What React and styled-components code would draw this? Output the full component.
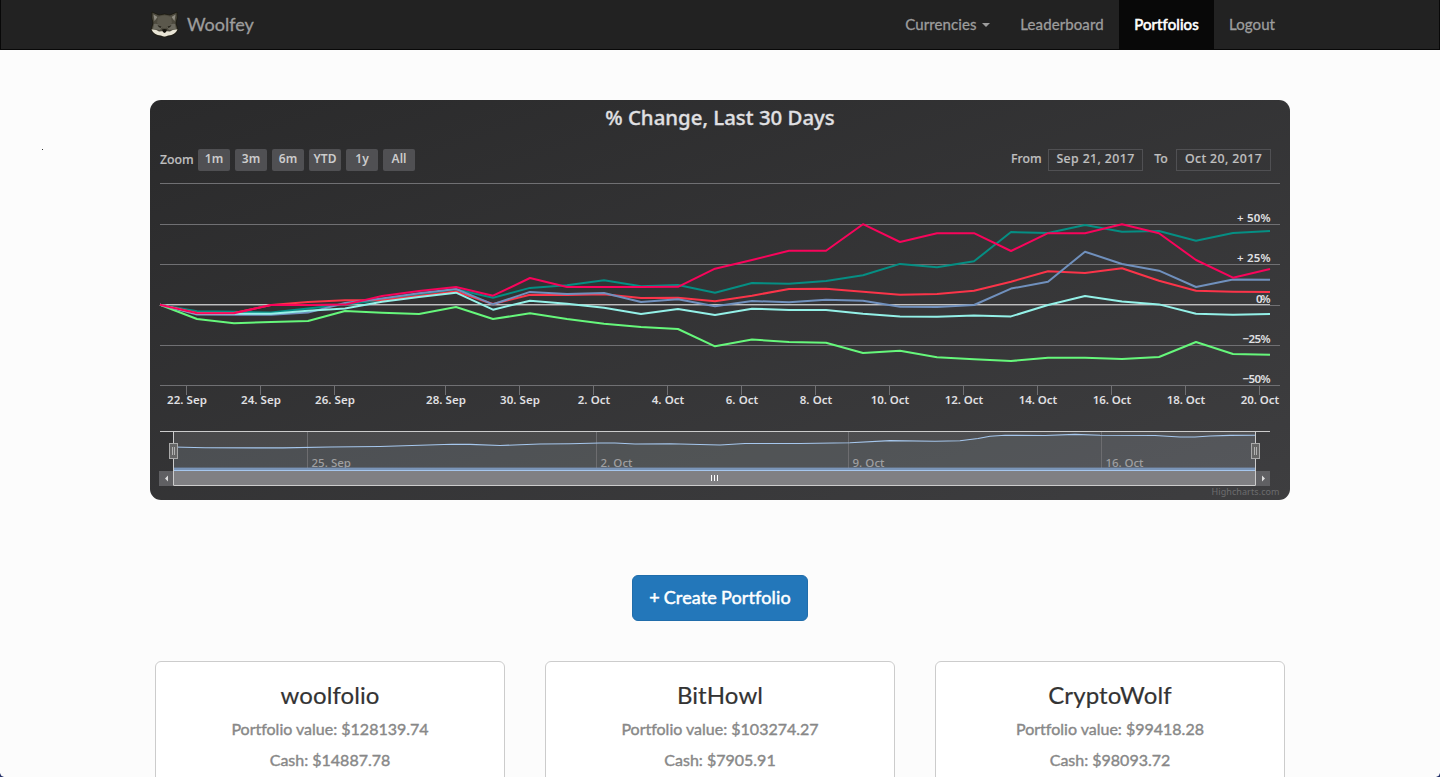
import React from "react";
import styled, { createGlobalStyle } from "styled-components";

const GlobalStyle = createGlobalStyle`
  * { box-sizing: border-box; }
  html, body { margin: 0; height: 100%; overflow: hidden; background: #fcfcfc; }
  body { font-family: Lato, sans-serif; color: #333; }
`;

const CHART_FONT = `"Noto Sans", "Open Sans", sans-serif`;

const Page = styled.div`
  position: relative;
  height: 777px;
  overflow: hidden;
`;

const Navbar = styled.nav`
  height: 50px;
  background: #222;
  border-bottom: 1px solid #080808;
  border-left: 1px solid #080808;
  border-right: 1px solid #080808;
`;

const Container = styled.div`
  width: 1140px;
  margin: 0 auto;
`;

const NavInner = styled(Container)`
  display: flex;
  justify-content: space-between;
  height: 49px;
`;

const Brand = styled.a`
  display: flex;
  align-items: center;
  gap: 8px;
  font-size: 18px;
  line-height: 20px;
  color: #9d9d9d;
  -webkit-text-stroke: 0.3px currentColor;
`;

const BrandName = styled.span`
  padding-bottom: 2px;
`;

const NavList = styled.div`
  display: flex;
`;

const NavLink = styled.a`
  display: flex;
  align-items: center;
  justify-content: center;
  width: ${(p) => p.$width}px;
  padding-bottom: 2px;
  font-size: 15px;
  letter-spacing: 0.1px;
  font-variant-ligatures: none;
  color: ${(p) => (p.$active ? "#fff" : "#9d9d9d")};
  background: ${(p) => (p.$active ? "#080808" : "transparent")};
  -webkit-text-stroke: ${(p) => (p.$active ? 0.6 : 0.3)}px currentColor;
`;

const Caret = styled.span`
  margin: 3px 0 0 5px;
  border-top: 4px solid currentColor;
  border-left: 4px solid transparent;
  border-right: 4px solid transparent;
`;

const ChartPanel = styled.section`
  height: 400px;
  margin-top: 50px;
  border-radius: 11px;
  overflow: hidden;
  background: linear-gradient(to bottom right, #2a2a2b 0%, #3e3e40 100%);
  font-family: ${CHART_FONT};
`;

const ChartTitle = styled.h2`
  margin: 0;
  height: 49px;
  padding-top: 3px;
  line-height: 28px;
  font-size: 20.4px;
  font-weight: 500;
  text-align: center;
  color: #e0e0e3;
  -webkit-text-stroke: 0.3px currentColor;
`;

const RangeBar = styled.div`
  display: flex;
  justify-content: space-between;
  height: 31px;
  padding: 0 19px 0 10px;
  font-size: 12.3px;
  font-weight: 500;
  line-height: 19px;
  color: #c0c0c0;
  -webkit-text-stroke: 0.15px currentColor;
`;

const RangeGroup = styled.div`
  display: flex;
  gap: ${(p) => p.$gap}px;
`;

const RangeLabel = styled.span`
  width: ${(p) => p.$width}px;
  padding-top: ${(p) => p.$drop || 0}px;
  white-space: nowrap;
`;

const RangeButton = styled.button`
  width: 32px;
  height: 22px;
  padding: 0 0 3px;
  border: 0;
  border-radius: 2px;
  background: #505053;
  color: #ccc;
  font: 600 12px/19px ${CHART_FONT};
  -webkit-text-stroke: 0;
`;

const DateBox = styled.span`
  width: 95px;
  height: 22px;
  border: 1px solid #505053;
  line-height: 18px;
  letter-spacing: 0.4px;
  text-align: center;
  white-space: nowrap;
`;

const Plot = styled.svg`
  display: block;
`;

const Actions = styled.div`
  display: flex;
  justify-content: center;
  margin: 75px 0 40px;
`;

const CreateButton = styled.button`
  width: 176px;
  height: 46px;
  padding: 0 0 2px;
  border: 1px solid #206dab;
  border-radius: 6px;
  background: #2377ba;
  color: #fff;
  font: 18px/24px Lato, sans-serif;
  letter-spacing: 0.15px;
  word-spacing: -0.8px;
  font-variant-ligatures: none;
  -webkit-text-stroke: 0.5px currentColor;
`;

const CardRow = styled.div`
  display: grid;
  grid-template-columns: repeat(3, 350px);
  justify-content: center;
  gap: 40px;
`;

const Card = styled.article`
  height: 240px;
  padding-top: 18px;
  border: 1px solid #ccc;
  border-radius: 6px;
  background: #fff;
  text-align: center;
`;

const CardTitle = styled.h3`
  margin: 0 0 3px;
  font-size: 24px;
  font-weight: 400;
  line-height: 30px;
  letter-spacing: 0.1px;
  -webkit-text-stroke: 0.2px currentColor;
`;

const CardLine = styled.p`
  margin: 0;
  font-size: 16px;
  line-height: 31px;
  font-variant-ligatures: none;
  color: #888;
  -webkit-text-stroke: 0.4px currentColor;
`;

const Speck = styled.span`
  position: absolute;
  left: 42px;
  top: 149px;
  width: 1px;
  height: 1px;
  background: #333;
`;

const Corner = styled.span`
  position: absolute;
  bottom: 0;
  ${(p) => p.$side}: 0;
  width: 4px;
  height: 4px;
  background: radial-gradient(circle at ${(p) => (p.$side === "left" ? "100%" : "0")} 0, transparent 3.4px, #27336b 4px);
`;

const SERIES = [
  { name: "green", stroke: "#66f77b", y: [304.7,319,323.3,322,321,311,312.7,314,307,319,313.3,319,323.7,327,329,346.3,339.5,342,342.8,353,350.8,357.3,359.3,361,357.7,357.7,359,357,342,354,354.7] },
  { name: "teal", stroke: "#058e83", y: [304.7,311.3,311.7,312.5,308.4,304.5,300,294.5,289.2,297.7,287.9,285.3,280.3,286.3,285,292.7,283,283.7,281,275.3,263.9,267.3,261.3,232,233,225,231.7,231,240.7,233,231] },
  { name: "red", stroke: "#fb3449", y: [304.7,313,313,305,302,300.3,300.3,296,291.5,304,294.7,295,294.3,298,297.7,301.3,295.7,289,288.7,291.7,294.7,294,290.7,281.7,271.3,273,268.3,280.7,290.7,291.7,292] },
  { name: "blue", stroke: "#7090bd", y: [304.7,314.6,314.8,314.8,312.6,303,298.5,293.3,289,304.3,291.9,294,293,302,299.3,306.3,301,302.3,299.8,300.7,306.7,307,305,288.6,281.7,251.7,264,270.7,287,279.5,279.8] },
  { name: "cyan", stroke: "#94f1e8", y: [304.7,313.6,313.8,313.8,310.7,308.5,301.7,297,292.7,309.7,300.7,303.7,307.7,314,309,315,308.7,310,310,313.7,316.5,316.8,315.4,316.4,305,296,301.5,304.4,313.8,314.7,314] },
  { name: "pink", stroke: "#f8045b", y: [304.7,313.3,313.3,305,305,304.6,296,291,287,295.7,278,287,287,287,286.8,268.7,260,250.8,250.8,224.2,242,233.2,233.2,251,233.2,233.2,224.2,233.2,260,277.7,269] },
];

const GRID = [183.5, 224.5, 264.5, 305.5, 345.5, 385.5];

const Y_LABELS = [
  ["+ 50%", 222, 33.5],
  ["+ 25%", 262, 33.5],
  ["0%", 303, 14.5],
  ["−25%", 343, 28],
  ["−50%", 383, 28],
];

const X_LABELS = [
  ["22. Sep", 186], ["24. Sep", 260], ["26. Sep", 334], ["28. Sep", 445], ["30. Sep", 519],
  ["2. Oct", 593], ["4. Oct", 667], ["6. Oct", 741], ["8. Oct", 815], ["10. Oct", 889],
  ["12. Oct", 963], ["14. Oct", 1037], ["16. Oct", 1111], ["18. Oct", 1185], ["20. Oct", 1259],
];

const NAV_LABELS = [["25. Sep", 307, 39.5], ["2. Oct", 596, 32], ["9. Oct", 848, 32], ["16. Oct", 1101, 38]];

const NAV_LINE =
  "173,447 205,447.7 283,447.9 330,447 380,446.5 420,445.3 452,444.2 470,444.4 500,445.5 520,444.8 540,444 570,443.8 600,443 615,443 635,444 670,443.7 700,444.5 720,445 745,443.5 800,443.5 850,442.7 890,440.6 935,441.3 960,440.7 978,438.5 990,436.3 1005,435.3 1045,435.5 1075,434.4 1100,435.3 1155,435.5 1180,437 1195,437 1210,436 1230,435.4 1255,435.3";

const labelWidth = (text) => (text.endsWith("Sep") ? 40 : text.length === 7 ? 38.5 : 32.5);

const points = (ys) => ys.map((y, i) => `${160 + i * 37},${y}`).join(" ");

function WolfLogo() {
  return (
    <svg width="29" height="27" viewBox="0 0 29 27">
      <path d="M2 1 L9 4 Q14.500 2 20 4 L27 1 Q28 7 26 12 L28 19 Q25 25 18 25 Q14.500 27.500 11 25 Q4 25 1 19 L3 12 Q1 7 2 1Z" fill="#4d4a3e" stroke="#17150c" strokeWidth="0.8" />
      <path d="M3.500 3.500 L7.500 6 L4.500 10Z M25.500 3.500 L21.500 6 L24.500 10Z" fill="#8e8b80" />
      <path d="M8 6 Q14.500 3 21 6 L22 12 L16 17 H13 L7 12Z" fill="#5b584c" />
      <path d="M4 13 Q8 12 12 16 L10 19 L3 18Z M25 13 Q21 12 17 16 L19 19 L26 18Z" fill="#6c6a5f" />
      <path d="M1.500 18.500 Q6 18 9 20.500 Q12 20 14.500 20 Q17 20 20 20.500 Q23 18 27.500 18.500 Q25 24 18 24.500 Q14.500 26.500 11 24.500 Q4 24 1.500 18.500Z" fill="#e9e5d6" />
      <path d="M7.500 14 L11.500 15.500 L10.500 17 Q8.500 16.500 7.500 14Z M21.500 14 L17.500 15.500 L18.500 17 Q20.500 16.500 21.500 14Z" fill="#29271e" />
      <path d="M12 18.500 Q14.500 17.500 17 18.500 Q16.500 21.500 14.500 22 Q12.500 21.500 12 18.500Z" fill="#15130d" />
    </svg>
  );
}

function Handle({ x }) {
  return (
    <g>
      <rect x={x - 4} y="443.5" width="8" height="15" fill="#666" stroke="#aaa" />
      <path d={`M${x - 1} 447v8M${x + 1} 447v8`} stroke="#bbb" strokeWidth="0.9" />
    </g>
  );
}

function PercentChart() {
  return (
    <Plot width="1140" height="320" viewBox="150 180 1140 320" fontFamily={CHART_FONT}>
      {GRID.map((y) => (
        <line key={y} x1="160" x2="1280" y1={y} y2={y} stroke="#707073" />
      ))}
      <line x1="160" x2="1270" y1="304.5" y2="304.5" stroke="#c0c0c0" />
      {X_LABELS.map(([text, x]) => (
        <g key={text}>
          <line x1={x + 0.5} x2={x + 0.5} y1="386" y2="395" stroke="#707073" />
          <text x={x + 1} y="404" fontSize="11.5" fontWeight="600" fill="#e0e0e3" textAnchor="middle" textLength={labelWidth(text)}>{text}</text>
        </g>
      ))}
      {SERIES.map((s) => (
        <polyline key={s.name} points={points(s.y)} fill="none" stroke={s.stroke} strokeWidth="2" strokeLinejoin="round" />
      ))}
      {Y_LABELS.map(([text, y, w]) => (
        <text key={text} x={1270.5 - w} y={y} fontSize="11.5" fontWeight="600" fill="#e0e0e3" textLength={w}>{text}</text>
      ))}

      <polygon points={`173,471 ${NAV_LINE} 1255,471`} fill="#7798bf" fillOpacity="0.07" />
      {NAV_LABELS.map(([text, x, w]) => (
        <g key={text}>
          <line x1={x + 0.5} x2={x + 0.5} y1="432" y2="470" stroke="#5c5c5f" />
          <text x={x + 4.5} y="467" fontSize="11.5" fontWeight="500" fill="#949496" textLength={w}>{text}</text>
        </g>
      ))}
      <rect x="173" y="432" width="1082" height="39" fill="#fff" fillOpacity="0.11" />
      <polyline points={NAV_LINE} fill="none" stroke="#a6c7ed" strokeWidth="1.1" />
      <rect x="173" y="467.600" width="1082" height="2.400" fill="#7a95b8" />
      <rect x="173" y="470" width="1082" height="1" fill="#a6c7ed" />
      <rect x="159" y="471" width="14" height="15" fill="#606063" />
      <rect x="1256" y="471" width="14" height="15" fill="#606063" />
      <path d="M168 475.500v6l-3-3z M1262 475.500v6l3-3z" fill="#ddd" />
      <rect x="173" y="471" width="1082" height="14" fill="#808083" />
      <path d="M711.5 475v6M714.5 475v6M717.5 475v6" stroke="#fff" />
      <path d="M160 431.500H1270M173.500 431.500V485.500H1255.500V431.500" fill="none" stroke="#ccc" />
      <Handle x={173.5} />
      <Handle x={1255.5} />
      <text x="1211.500" y="495" fontSize="9" fill="#6c6c6e" textLength="68">Highcharts.com</text>
    </Plot>
  );
}

const PORTFOLIOS = [
  { name: "woolfolio", value: "$128139.74", cash: "$14887.78" },
  { name: "BitHowl", value: "$103274.27", cash: "$7905.91" },
  { name: "CryptoWolf", value: "$99418.28", cash: "$98093.72" },
];

export default function App() {
  return (
    <Page>
      <GlobalStyle />
      <Navbar>
        <NavInner>
          <Brand><WolfLogo /><BrandName>Woolfey</BrandName></Brand>
          <NavList>
            <NavLink $width={115}>Currencies<Caret /></NavLink>
            <NavLink $width={114}>Leaderboard</NavLink>
            <NavLink $width={95} $active>Portfolios</NavLink>
            <NavLink $width={76}>Logout</NavLink>
          </NavList>
        </NavInner>
      </Navbar>
      <Container>
        <ChartPanel>
          <ChartTitle>% Change, Last 30 Days</ChartTitle>
          <RangeBar>
            <RangeGroup $gap={5}>
              <RangeLabel $width={33} $drop={1}>Zoom</RangeLabel>
              {["1m", "3m", "6m", "YTD", "1y", "All"].map((r) => (
                <RangeButton key={r}>{r}</RangeButton>
              ))}
            </RangeGroup>
            <RangeGroup $gap={8}>
              <RangeLabel $width={29}>From</RangeLabel>
              <DateBox>Sep 21, 2017</DateBox>
              <RangeLabel $width={17}>&nbsp;To</RangeLabel>
              <DateBox>Oct 20, 2017</DateBox>
            </RangeGroup>
          </RangeBar>
          <PercentChart />
        </ChartPanel>
        <Actions>
          <CreateButton>+ Create Portfolio</CreateButton>
        </Actions>
        <CardRow>
          {PORTFOLIOS.map((p) => (
            <Card key={p.name}>
              <CardTitle>{p.name}</CardTitle>
              <CardLine>Portfolio value: {p.value}</CardLine>
              <CardLine>Cash: {p.cash}</CardLine>
            </Card>
          ))}
        </CardRow>
      </Container>
      <Speck />
      <Corner $side="left" />
      <Corner $side="right" />
    </Page>
  );
}
